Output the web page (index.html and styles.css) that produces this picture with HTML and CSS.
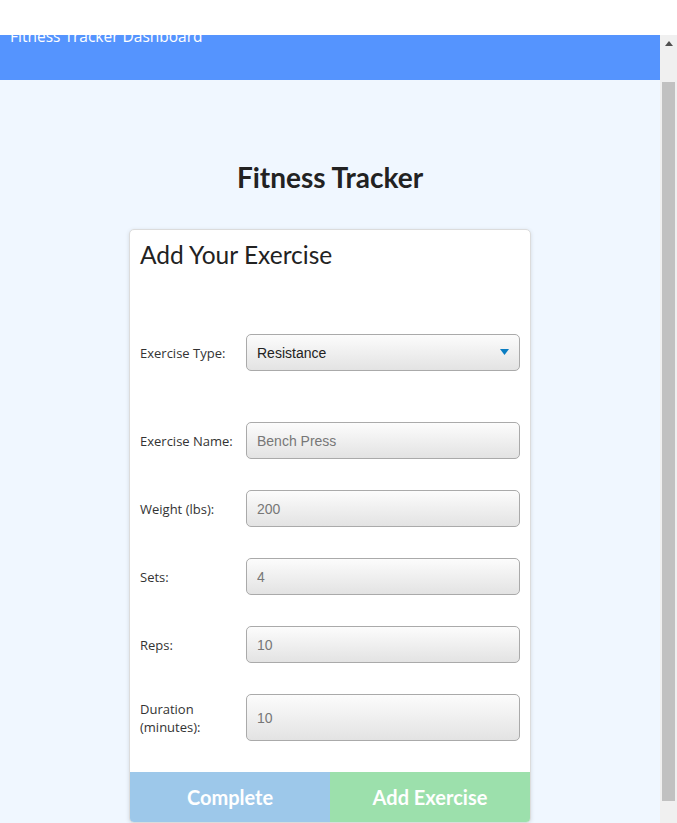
FILE: index.html
```html
<!DOCTYPE html>
<html lang="en">
<head>
    <meta charset="UTF-8">
    <meta name="viewport" content="width=device-width, initial-scale=1.0">
    <title>Fitness Tracker Dashboard</title>
    <link rel="stylesheet" href="styles.css">
</head>
<body>
    <div class="topbar"></div>
    <div class="frame">
        <div class="page">
            <header class="header">
                <span class="header-title">Fitness Tracker Dashboard</span>
            </header>
            <main class="content">
                <h1>Fitness Tracker</h1>
                <div class="card">
                    <div class="card-body">
                        <h2>Add Your Exercise</h2>
                        <div class="form-row first">
                            <label for="exerciseType">Exercise Type:</label>
                            <div class="select-wrap">
                                <select id="exerciseType">
                                    <option>Resistance</option>
                                    <option>Cardio</option>
                                </select>
                                <svg class="select-arrow" width="9" height="6" viewBox="0 0 9 6">
                                    <path d="M0 0 L9 0 L4.5 6 Z" fill="#0a7dc2"/>
                                </svg>
                            </div>
                        </div>
                        <div class="form-row">
                            <label for="exerciseName">Exercise Name:</label>
                            <input type="text" id="exerciseName" placeholder="Bench Press">
                        </div>
                        <div class="form-row">
                            <label for="weight">Weight (lbs):</label>
                            <input type="number" id="weight" placeholder="200">
                        </div>
                        <div class="form-row">
                            <label for="sets">Sets:</label>
                            <input type="number" id="sets" placeholder="4">
                        </div>
                        <div class="form-row">
                            <label for="reps">Reps:</label>
                            <input type="number" id="reps" placeholder="10">
                        </div>
                        <div class="form-row">
                            <label for="duration">Duration (minutes):</label>
                            <input type="number" id="duration" placeholder="10">
                        </div>
                    </div>
                    <div class="actions">
                        <button class="btn btn-complete">Complete</button>
                        <button class="btn btn-add">Add Exercise</button>
                    </div>
                </div>
            </main>
        </div>
        <div class="scrollbar">
            <div class="scroll-up">
                <svg width="8" height="5" viewBox="0 0 8 5">
                    <path d="M0 5 L4 0 L8 5 Z" fill="#505050"/>
                </svg>
            </div>
            <div class="scroll-thumb"></div>
        </div>
    </div>
</body>
</html>
```

FILE: styles.css
```css
body {
    margin: 0;
    font-family: Lato, "Open Sans", sans-serif;
    background-color: #fff;
    height: 823px;
    overflow: hidden;
}
.topbar {
    height: 35px;
    background-color: #fff;
}
.frame {
    display: flex;
    height: 788px;
}
.page {
    flex: 1;
    overflow: hidden;
    background-color: #f0f7ff;
}
.header {
    height: 45px;
    background-color: #5594fe;
    overflow: hidden;
    padding-left: 10px;
}
.header-title {
    display: block;
    margin-top: -10px;
    font-family: "Open Sans", sans-serif;
    font-size: 15.5px;
    line-height: 22px;
    color: #fff;
}
.content {
    display: flex;
    flex-direction: column;
    align-items: center;
    padding-top: 80px;
}
h1 {
    margin: 0 0 35px;
    font-size: 28px;
    line-height: 34px;
    font-weight: 700;
    color: #222;
}
.card {
    width: 400px;
    background-color: #fff;
    border: 1px solid #dcdcdc;
    border-radius: 5px;
    box-shadow: 0 1px 4px rgba(0, 0, 0, 0.12);
    overflow: hidden;
}
.card-body {
    padding: 10px 10px 31px 10px;
}
h2 {
    margin: 0 0 65px;
    font-size: 24.5px;
    line-height: 29px;
    font-weight: 400;
    color: #222;
}
.form-row {
    display: flex;
    margin-bottom: 31px;
}
.form-row:last-child {
    margin-bottom: 0;
}
.form-row.first {
    margin-bottom: 51px;
}
.form-row label {
    flex: none;
    width: 106px;
    display: flex;
    align-items: center;
    padding: 6px 0 5px;
    font-family: "Open Sans", sans-serif;
    font-size: 13px;
    line-height: 18px;
    color: #333;
}
.form-row input,
.form-row select {
    flex: 1;
    width: 100%;
    min-height: 37px;
    padding: 0 10px;
    border: 1px solid #aaa;
    border-radius: 5px;
    background: linear-gradient(#fcfcfc, #e3e3e3);
    font-family: Arial, "Liberation Sans", sans-serif;
    font-size: 14px;
    color: #222;
    box-sizing: border-box;
    appearance: none;
    -moz-appearance: textfield;
    outline: none;
}
.form-row input::placeholder {
    color: #777;
}
.form-row input::-webkit-inner-spin-button,
.form-row input::-webkit-outer-spin-button {
    -webkit-appearance: none;
    margin: 0;
}
.select-wrap {
    flex: 1;
    display: flex;
    position: relative;
}
.select-arrow {
    position: absolute;
    right: 11px;
    top: 15px;
    pointer-events: none;
}
.actions {
    display: flex;
}
.btn {
    flex: 1;
    height: 50px;
    border: none;
    font-family: Lato, sans-serif;
    font-size: 20px;
    font-weight: 700;
    color: #fff;
    cursor: pointer;
}
.btn-complete {
    background-color: #9dc8ea;
}
.btn-add {
    background-color: #9ce0ac;
}
.scrollbar {
    width: 17px;
    flex: none;
    background-color: #f0f0f0;
    display: flex;
    flex-direction: column;
    align-items: center;
}
.scroll-up {
    height: 17px;
    width: 17px;
    display: flex;
    align-items: center;
    justify-content: center;
}
.scroll-thumb {
    width: 13px;
    height: 719px;
    margin-top: 30px;
    background-color: #c1c1c1;
}
```
